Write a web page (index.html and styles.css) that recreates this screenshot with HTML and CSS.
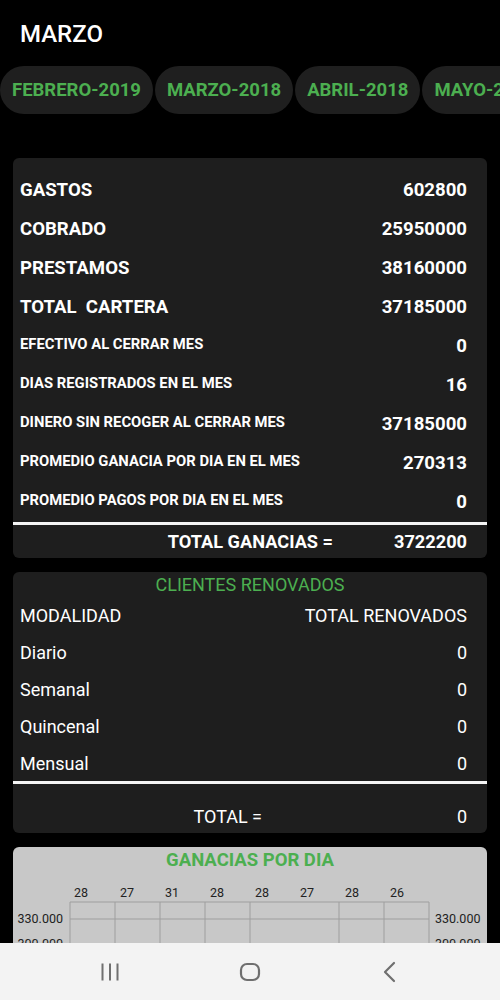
FILE: index.html
```html
<!DOCTYPE html>
<html lang="es">
<head>
    <meta charset="UTF-8">
    <meta name="viewport" content="width=device-width, initial-scale=1.0">
    <title>Marzo</title>
    <link rel="stylesheet" href="styles.css">
</head>
<body>
    <h1 class="title">MARZO</h1>

    <div class="chips">
        <button class="chip">FEBRERO-2019</button>
        <button class="chip">MARZO-2018</button>
        <button class="chip">ABRIL-2018</button>
        <button class="chip">MAYO-2018</button>
    </div>

    <div class="card summary">
        <div class="row big"><span>GASTOS</span><span>602800</span></div>
        <div class="row big"><span>COBRADO</span><span>25950000</span></div>
        <div class="row big"><span>PRESTAMOS</span><span>38160000</span></div>
        <div class="row big"><span>TOTAL&nbsp; CARTERA</span><span>37185000</span></div>
        <div class="row small"><span class="label">EFECTIVO AL CERRAR MES</span><span class="value">0</span></div>
        <div class="row small"><span class="label">DIAS REGISTRADOS EN EL MES</span><span class="value">16</span></div>
        <div class="row small"><span class="label">DINERO SIN RECOGER AL CERRAR MES</span><span class="value">37185000</span></div>
        <div class="row small"><span class="label">PROMEDIO GANACIA POR DIA EN EL MES</span><span class="value">270313</span></div>
        <div class="row small"><span class="label">PROMEDIO PAGOS POR DIA EN EL MES</span><span class="value">0</span></div>
        <div class="divider"></div>
        <div class="total total-ganancias"><span>TOTAL GANACIAS =</span><span>3722200</span></div>
    </div>

    <div class="card renovados">
        <div class="card-title">CLIENTES RENOVADOS</div>
        <div class="row plain"><span>MODALIDAD</span><span>TOTAL RENOVADOS</span></div>
        <div class="row plain"><span>Diario</span><span>0</span></div>
        <div class="row plain"><span>Semanal</span><span>0</span></div>
        <div class="row plain"><span>Quincenal</span><span>0</span></div>
        <div class="row plain"><span>Mensual</span><span>0</span></div>
        <div class="divider"></div>
        <div class="total total-renovados"><span>TOTAL =</span><span>0</span></div>
    </div>

    <div class="card chart-card">
        <div class="chart-title">GANACIAS POR DIA</div>
        <svg class="chart" width="474" height="200" viewBox="0 0 474 200">
            <g class="grid">
                <line x1="57" y1="30" x2="416" y2="30"/>
                <line x1="57" y1="47" x2="416" y2="47"/>
                <line x1="57" y1="72" x2="416" y2="72"/>
                <line x1="57" y1="97" x2="416" y2="97"/>
                <line x1="57" y1="122" x2="416" y2="122"/>
                <line x1="57" y1="30" x2="57" y2="200"/>
                <line x1="102" y1="30" x2="102" y2="200"/>
                <line x1="147" y1="30" x2="147" y2="200"/>
                <line x1="192" y1="30" x2="192" y2="200"/>
                <line x1="237" y1="30" x2="237" y2="200"/>
                <line x1="326" y1="30" x2="326" y2="200"/>
                <line x1="371" y1="30" x2="371" y2="200"/>
                <line x1="416" y1="30" x2="416" y2="200"/>
            </g>
            <g class="axis-x">
                <text x="61" y="25">28</text>
                <text x="107" y="25">27</text>
                <text x="152" y="25">31</text>
                <text x="197" y="25">28</text>
                <text x="242" y="25">28</text>
                <text x="287" y="25">27</text>
                <text x="332" y="25">28</text>
                <text x="377" y="25">26</text>
            </g>
            <g class="axis-left">
                <text x="50" y="51">330.000</text>
                <text x="50" y="76">300.000</text>
                <text x="50" y="101">270.000</text>
            </g>
            <g class="axis-right">
                <text x="422" y="51">330.000</text>
                <text x="422" y="76">300.000</text>
                <text x="422" y="101">270.000</text>
            </g>
        </svg>
    </div>

    <nav class="navbar">
        <div class="nav-btn">
            <svg width="20" height="20" viewBox="0 0 20 20">
                <rect x="1.5" y="1.5" width="2" height="17" class="nav-fill"/>
                <rect x="9" y="1.5" width="2" height="17" class="nav-fill"/>
                <rect x="16.5" y="1.5" width="2" height="17" class="nav-fill"/>
            </svg>
        </div>
        <div class="nav-btn">
            <svg width="22" height="20" viewBox="0 0 22 20">
                <rect x="2" y="2" width="18" height="16" rx="6" class="nav-stroke"/>
            </svg>
        </div>
        <div class="nav-btn">
            <svg width="14" height="22" viewBox="0 0 14 22">
                <polyline points="11,2 2,11 11,20" class="nav-stroke"/>
            </svg>
        </div>
    </nav>
</body>
</html>
```

FILE: styles.css
```css
body {
    margin: 0;
    background-color: #000000;
    color: #ffffff;
    font-family: Roboto, "Noto Sans", Arial, sans-serif;
    padding-bottom: 60px;
}
.title {
    margin: 0;
    padding: 20px 0 0 20px;
    font-size: 24px;
    font-weight: 500;
    line-height: 28px;
}
.chips {
    display: flex;
    gap: 2px;
    overflow: hidden;
    margin-top: 18px;
}
.chip {
    flex-shrink: 0;
    height: 48px;
    padding: 0 12px;
    border: none;
    border-radius: 24px;
    background-color: #1f1f1f;
    color: #4caf50;
    font-family: Roboto, Arial, sans-serif;
    font-size: 18.5px;
    font-weight: bold;
}
.card {
    margin: 0 13px;
    background-color: #1e1e1e;
    border-radius: 6px;
}
.summary {
    margin-top: 44px;
    padding-top: 13px;
}
.row {
    display: flex;
    justify-content: space-between;
    padding: 0 20px 0 7px;
}
.row.big {
    height: 39px;
    line-height: 39px;
    font-size: 18.6px;
    font-weight: bold;
}
.row.small {
    height: 39px;
    align-items: flex-start;
    padding-top: 7px;
    box-sizing: border-box;
    font-weight: bold;
}
.row.small .label {
    font-size: 14.8px;
    line-height: 20px;
}
.row.small .value {
    font-size: 18.6px;
    line-height: 24px;
}
.divider {
    height: 3px;
    background-color: #f5f5f5;
}
.total {
    display: grid;
    padding-right: 20px;
}
.total-ganancias {
    grid-template-columns: 1fr 134px;
    height: 33px;
    line-height: 33px;
    font-size: 18.2px;
    font-weight: bold;
}
.total span {
    text-align: right;
}
.renovados {
    margin-top: 14px;
    padding-top: 1px;
}
.card-title {
    text-align: center;
    color: #4caf50;
    font-size: 18px;
    line-height: 24px;
}
.row.plain {
    height: 37px;
    line-height: 37px;
    font-size: 18px;
}
.renovados .divider {
    margin-top: -1px;
}
.total-renovados {
    grid-template-columns: 1fr 205px;
    padding-top: 21px;
    padding-bottom: 4px;
    font-size: 18px;
    line-height: 24px;
}
.chart-card {
    margin-top: 14px;
    padding-top: 1px;
    background-color: #c8c8c8;
    overflow: hidden;
}
.chart-title {
    text-align: center;
    color: #4caf50;
    font-size: 18.5px;
    font-weight: bold;
    line-height: 24px;
}
.chart {
    display: block;
}
.grid line {
    stroke: #9e9e9e;
    stroke-width: 1;
}
.chart text {
    font-family: Roboto, Arial, sans-serif;
    font-size: 12.5px;
    fill: #222222;
}
.axis-left text {
    text-anchor: end;
}
.navbar {
    position: fixed;
    left: 0;
    right: 0;
    bottom: 0;
    height: 57px;
    background-color: #f3f3f3;
    display: flex;
    justify-content: center;
    align-items: center;
}
.nav-btn {
    width: 140px;
    display: flex;
    justify-content: center;
}
.navbar svg {
    display: block;
}
.nav-fill {
    fill: #6f6f6f;
}
.nav-stroke {
    fill: none;
    stroke: #6f6f6f;
    stroke-width: 2.2;
    stroke-linecap: round;
    stroke-linejoin: round;
}
```
